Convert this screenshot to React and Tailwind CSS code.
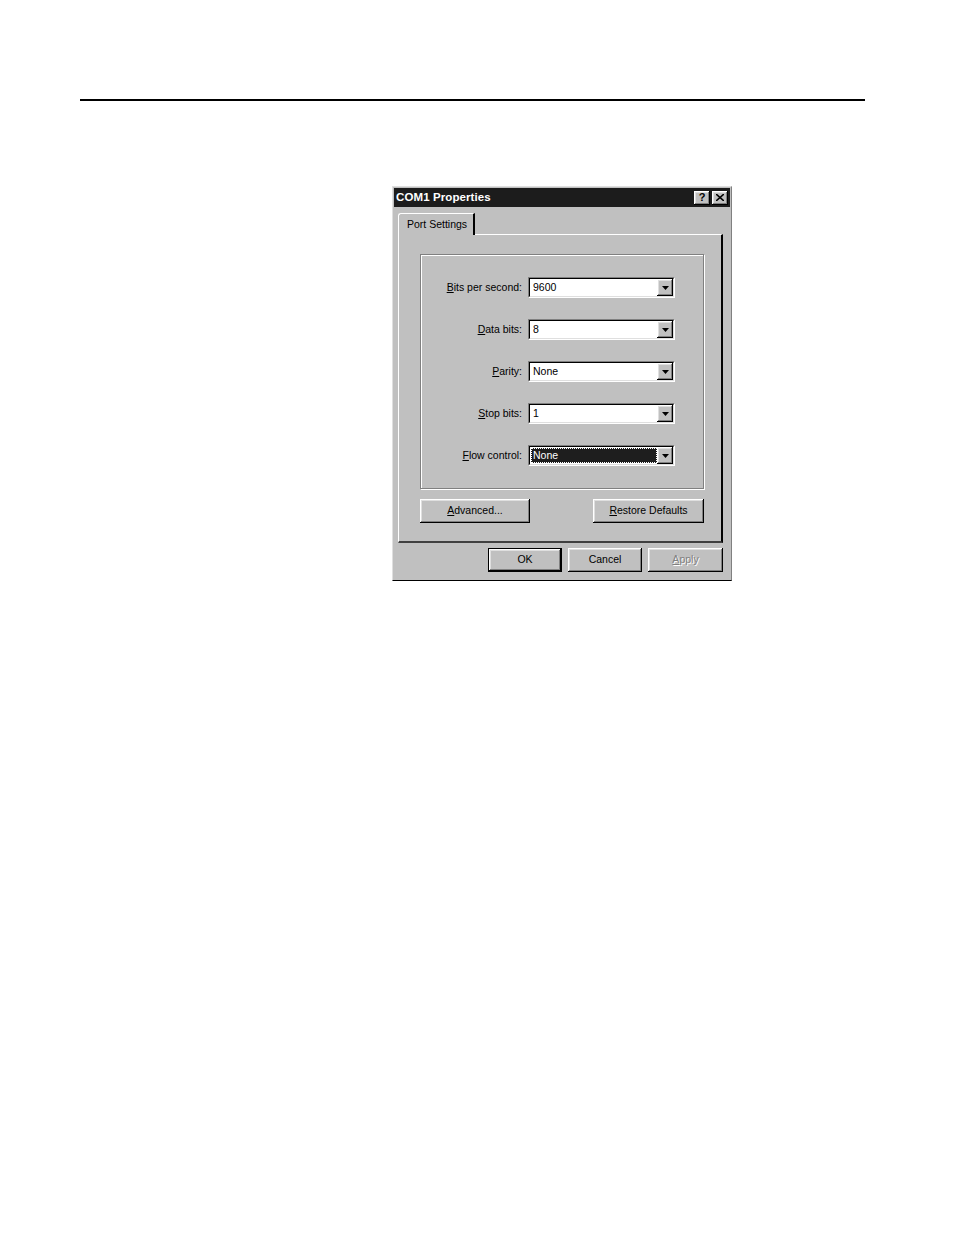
import React from "react";

const raised =
  "shadow-[inset_-1px_-1px_0_#000,inset_1px_1px_0_#fff,inset_-2px_-2px_0_#808080,inset_2px_2px_0_#dfdfdf]";

function U({ children }) {
  return <span className="underline underline-offset-[1px]">{children}</span>;
}

function Arrow() {
  return (
    <svg width="7" height="4" viewBox="0 0 7 4" className="block">
      <path d="M0 0h7L3.5 4z" fill="#000" />
    </svg>
  );
}

function Combo({ value, selected }) {
  return (
    <div className="w-[147px] h-[21px] border-t border-l border-[#808080] border-b-white border-r-white border-b border-r">
      <div className="w-full h-full border-t border-l border-black border-b border-r border-b-[#dfdfdf] border-r-[#dfdfdf] bg-white flex items-stretch">
        <div className="flex-1 flex items-center pl-[1px] py-[1px]">
          {selected ? (
            <div className="w-full h-full bg-[#1e1e1e] text-white border border-dotted border-white flex items-center pl-[1px]">
              {value}
            </div>
          ) : (
            <span className="pl-[2px]">{value}</span>
          )}
        </div>
        <div className={`w-[16px] h-full bg-[#c0c0c0] flex items-center justify-center ${raised}`}>
          <Arrow />
        </div>
      </div>
    </div>
  );
}

function Row({ label, value, selected }) {
  return (
    <div className="flex items-center justify-end gap-[6px] h-[21px]">
      <span>{label}</span>
      <Combo value={value} selected={selected} />
    </div>
  );
}

function Button({ children, className = "", isDefault }) {
  if (isDefault) {
    return (
      <div className={`border border-black ${className}`}>
        <div className={`w-full h-full bg-[#c0c0c0] flex items-center justify-center ${raised}`}>{children}</div>
      </div>
    );
  }
  return (
    <div className={`bg-[#c0c0c0] flex items-center justify-center ${raised} ${className}`}>{children}</div>
  );
}

export default function App() {
  return (
    <div className="w-[954px] h-[1235px] bg-white pt-[99px] font-['Liberation_Sans',Arial,sans-serif] text-black">
      <div className="ml-[80px] w-[785px] h-[2px] bg-black" />
      <div className="ml-[392px] mt-[85px] w-[340px] h-[395px] bg-[#c0c0c0] border-t border-l border-[#dfdfdf] border-r border-r-[#808080] border-b border-b-black text-[10.5px] flex flex-col">
        {/* title bar */}
        <div className="mx-[1px] mt-[1px] h-[19px] bg-[#1c1c1c] flex items-center justify-between pl-[2px] pr-[2px]">
          <span className="text-white font-bold text-[11.5px] tracking-[0.1px]">COM1 Properties</span>
          <div className="flex gap-[2px]">
            <div className={`w-[16px] h-[14px] bg-[#c0c0c0] flex items-center justify-center font-bold text-[11px] leading-none ${raised}`}>?</div>
            <div className={`w-[16px] h-[14px] bg-[#c0c0c0] flex items-center justify-center ${raised}`}>
              <svg width="8" height="7" viewBox="0 0 8 7">
                <path d="M0 0l8 7M8 0L0 7" stroke="#000" strokeWidth="1.6" />
              </svg>
            </div>
          </div>
        </div>

        {/* tab strip */}
        <div className="ml-[5px] mt-[6px] flex">
          <div className="relative z-10 w-[77px] h-[22px] border-t border-l border-white rounded-tl-[3px] border-r-2 border-r-black flex items-center pl-[8px] bg-[#c0c0c0]">
            Port Settings
          </div>
        </div>
        {/* tab panel */}
        <div className="ml-[5px] -mt-[1px] w-[325px] h-[309px] border-t border-l border-white border-r-2 border-r-black border-b-2 border-b-[#404040] flex flex-col">
          <div className="ml-[21px] mt-[19px] w-[284px] h-[235px] border border-[#808080] shadow-[1px_1px_0_#fff,inset_1px_1px_0_#fff] flex flex-col pt-[22px] pr-[28px] gap-[21px]">
            <Row label={<><U>B</U>its per second:</>} value="9600" />
            <Row label={<><U>D</U>ata bits:</>} value="8" />
            <Row label={<><U>P</U>arity:</>} value="None" />
            <Row label={<><U>S</U>top bits:</>} value="1" />
            <Row label={<><U>F</U>low control:</>} value="None" selected />
          </div>
          <div className="ml-[21px] mt-[10px] w-[284px] flex justify-between">
            <Button className="w-[110px] h-[24px]">
              <span><U>A</U>dvanced...</span>
            </Button>
            <Button className="w-[111px] h-[24px]">
              <span><U>R</U>estore Defaults</span>
            </Button>
          </div>
        </div>

        {/* bottom buttons */}
        <div className="mt-[5px] ml-[95px] flex gap-[6px]">
          <Button className="w-[74px] h-[24px]" isDefault>
            <span>OK</span>
          </Button>
          <Button className="w-[74px] h-[24px]">
            <span>Cancel</span>
          </Button>
          <Button className="w-[75px] h-[24px]">
            <span className="text-[#808080] [text-shadow:1px_1px_0_#fff]"><U>A</U>pply</span>
          </Button>
        </div>
      </div>
    </div>
  );
}
